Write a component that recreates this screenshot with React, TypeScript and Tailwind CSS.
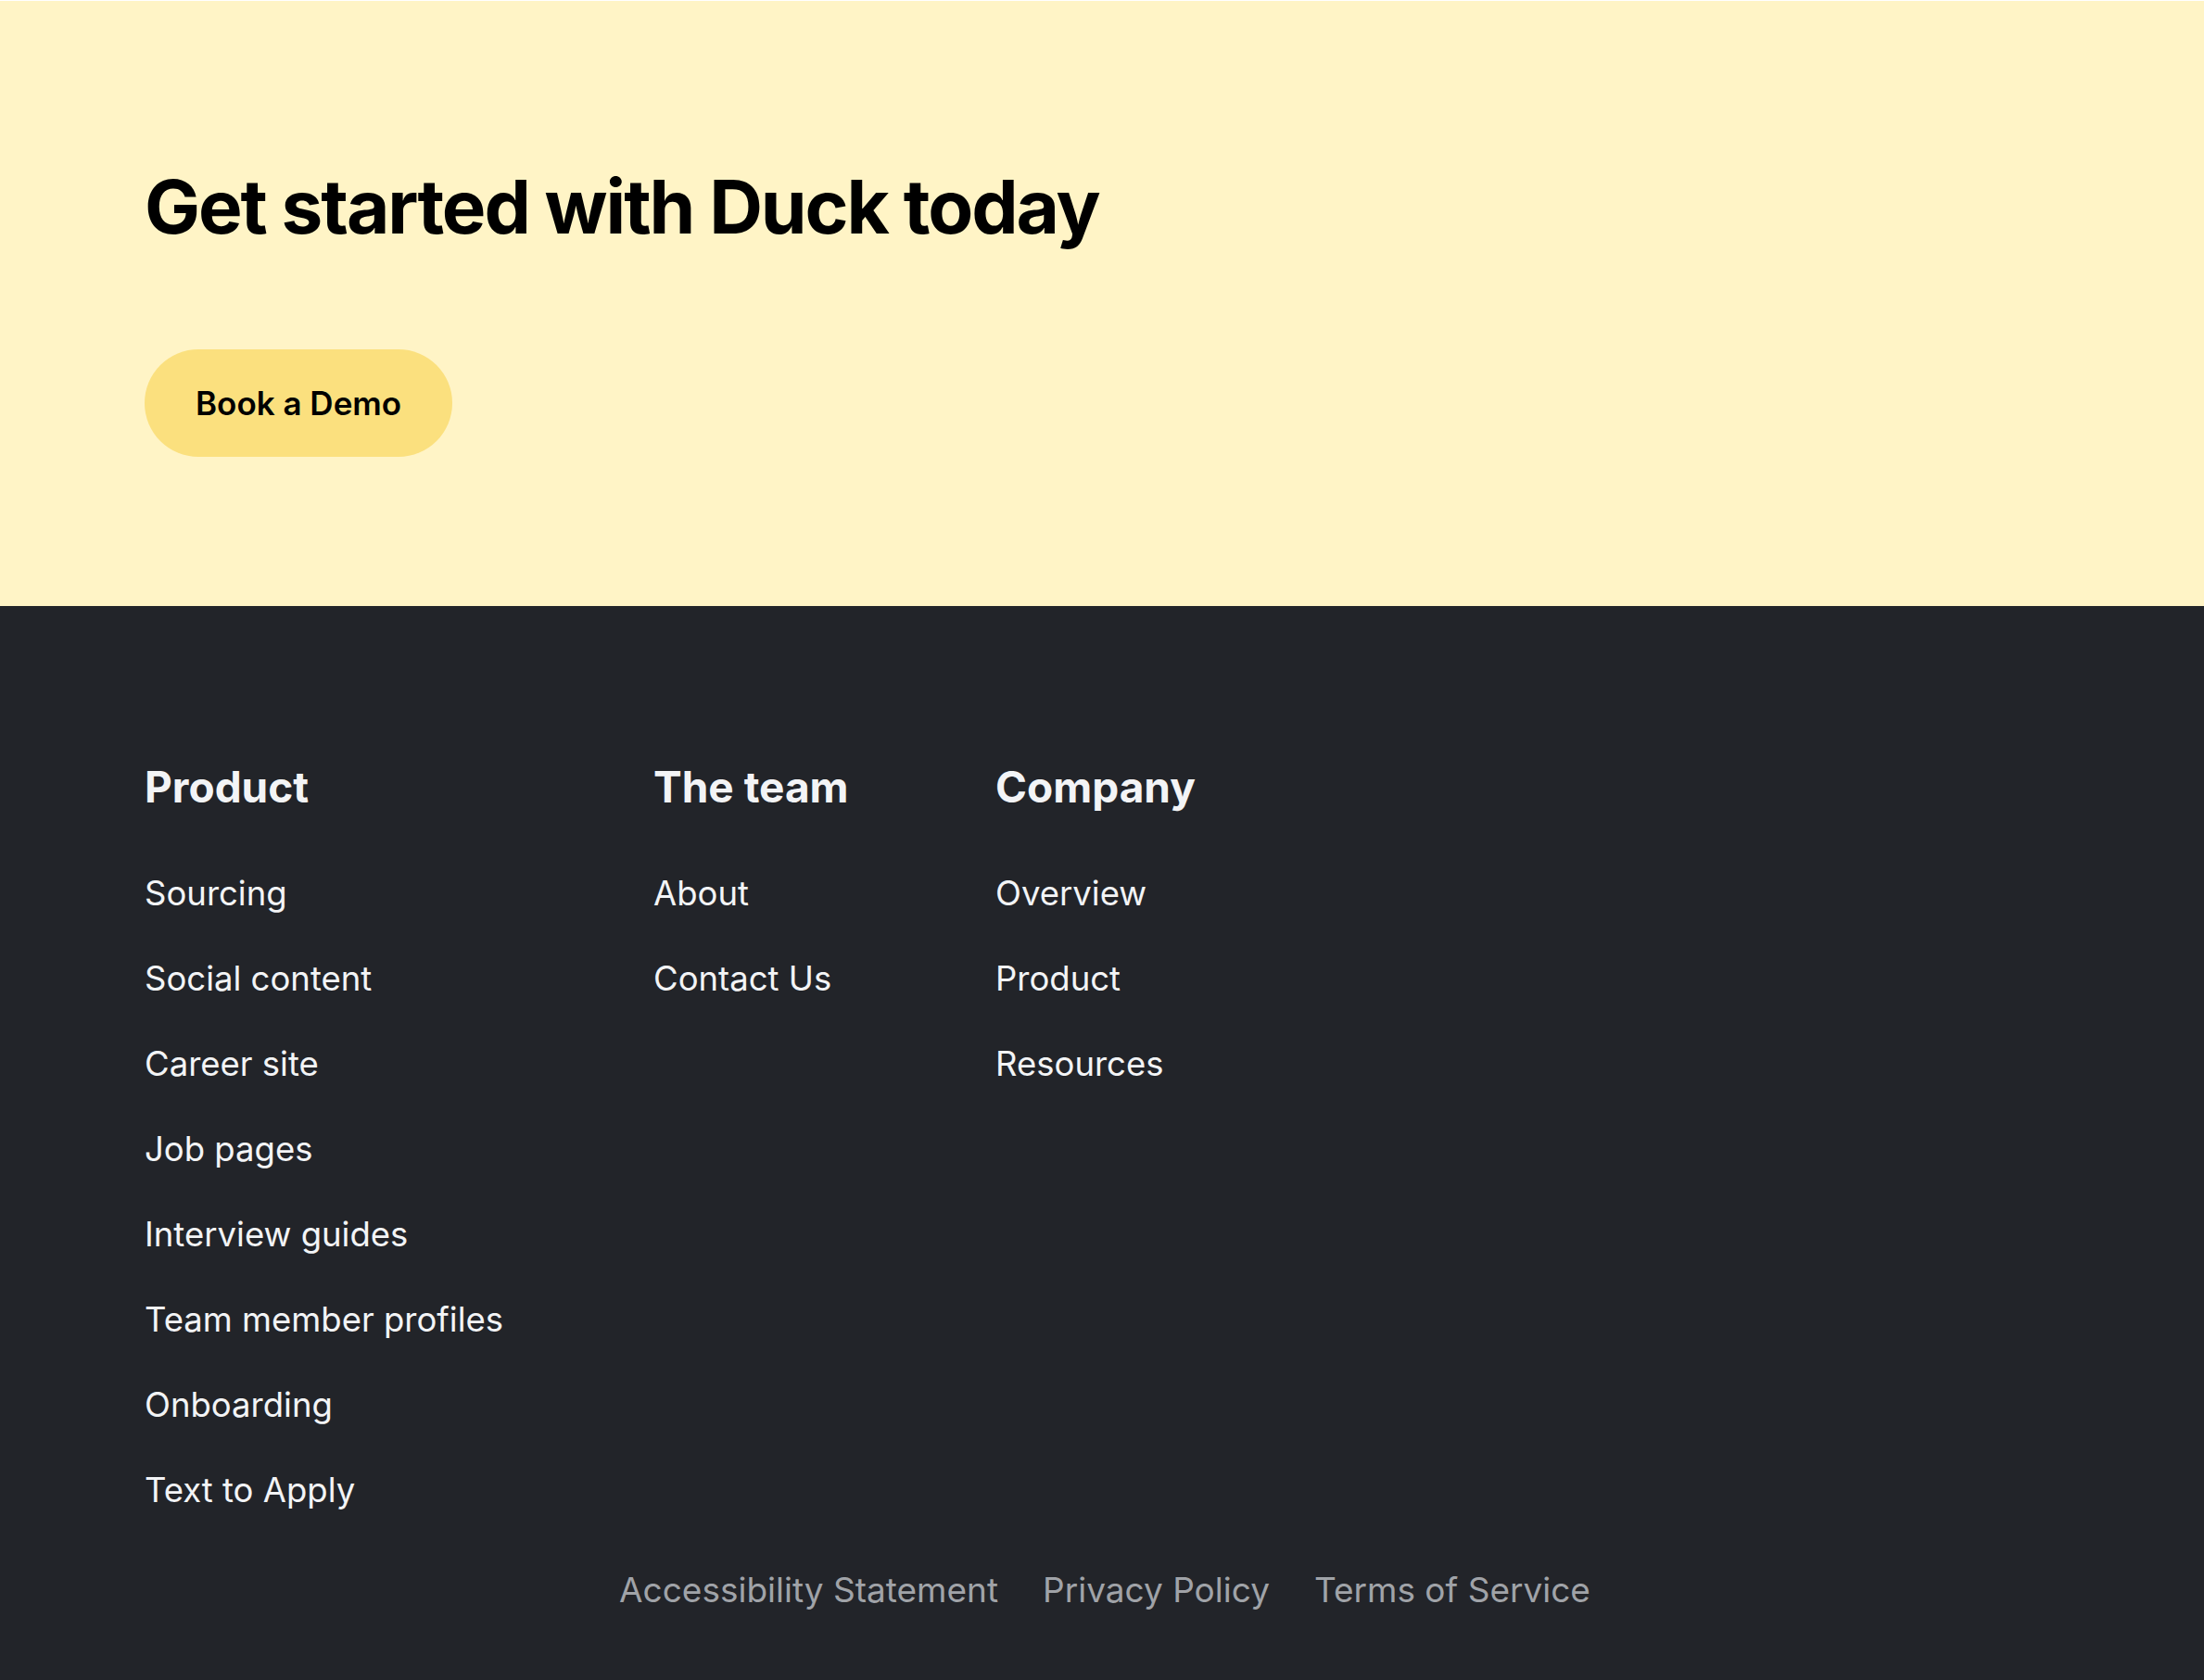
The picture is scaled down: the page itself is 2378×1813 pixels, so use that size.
import React from "react";

const productLinks = [
  "Sourcing",
  "Social content",
  "Career site",
  "Job pages",
  "Interview guides",
  "Team member profiles",
  "Onboarding",
  "Text to Apply",
];

const teamLinks = ["About", "Contact Us"];
const companyLinks = ["Overview", "Product", "Resources"];
const legalLinks = ["Accessibility Statement", "Privacy Policy", "Terms of Service"];

function FooterColumn({ title, links, width }: { title: string; links: string[]; width: string }) {
  return (
    <div className={`flex flex-col ${width}`}>
      <h3 className="text-[46px] leading-none font-bold text-[#f3f4f6]">{title}</h3>
      <ul className="mt-[70px] flex flex-col gap-[48px]">
        {links.map((link) => (
          <li key={link}>
            <a href="#" className="text-[36.5px] leading-[44px] text-[#f3f4f6] whitespace-nowrap">
              {link}
            </a>
          </li>
        ))}
      </ul>
    </div>
  );
}

export default function App() {
  return (
    <div className="min-h-screen w-full bg-[#222429] font-['Inter',sans-serif] antialiased">
      {/* CTA band */}
      <section className="border-t border-white bg-[#fff4c6] pl-[156px] pt-[182px] pb-[161px]">
        <h2 className="text-[80px] leading-none font-bold text-black tracking-[-0.026em]">
          Get started with Duck today
        </h2>
        <a
          href="#"
          className="mt-[114px] inline-flex h-[116px] items-center rounded-full bg-[#fbe07e] px-[55px] text-[35px] font-semibold text-black"
        >
          Book a Demo
        </a>
      </section>

      {/* Footer */}
      <footer className="pl-[156px] pt-[172px] pb-[71px]">
        <div className="flex">
          <FooterColumn title="Product" links={productLinks} width="w-[549px]" />
          <FooterColumn title="The team" links={teamLinks} width="w-[369px]" />
          <FooterColumn title="Company" links={companyLinks} width="w-[400px]" />
        </div>
        <div className="-ml-[150px] mt-[64px] flex justify-center gap-[48px]">
          {legalLinks.map((link) => (
            <a key={link} href="#" className="text-[37px] leading-[44px] text-[#a0a3a8]">
              {link}
            </a>
          ))}
        </div>
      </footer>
    </div>
  );
}
